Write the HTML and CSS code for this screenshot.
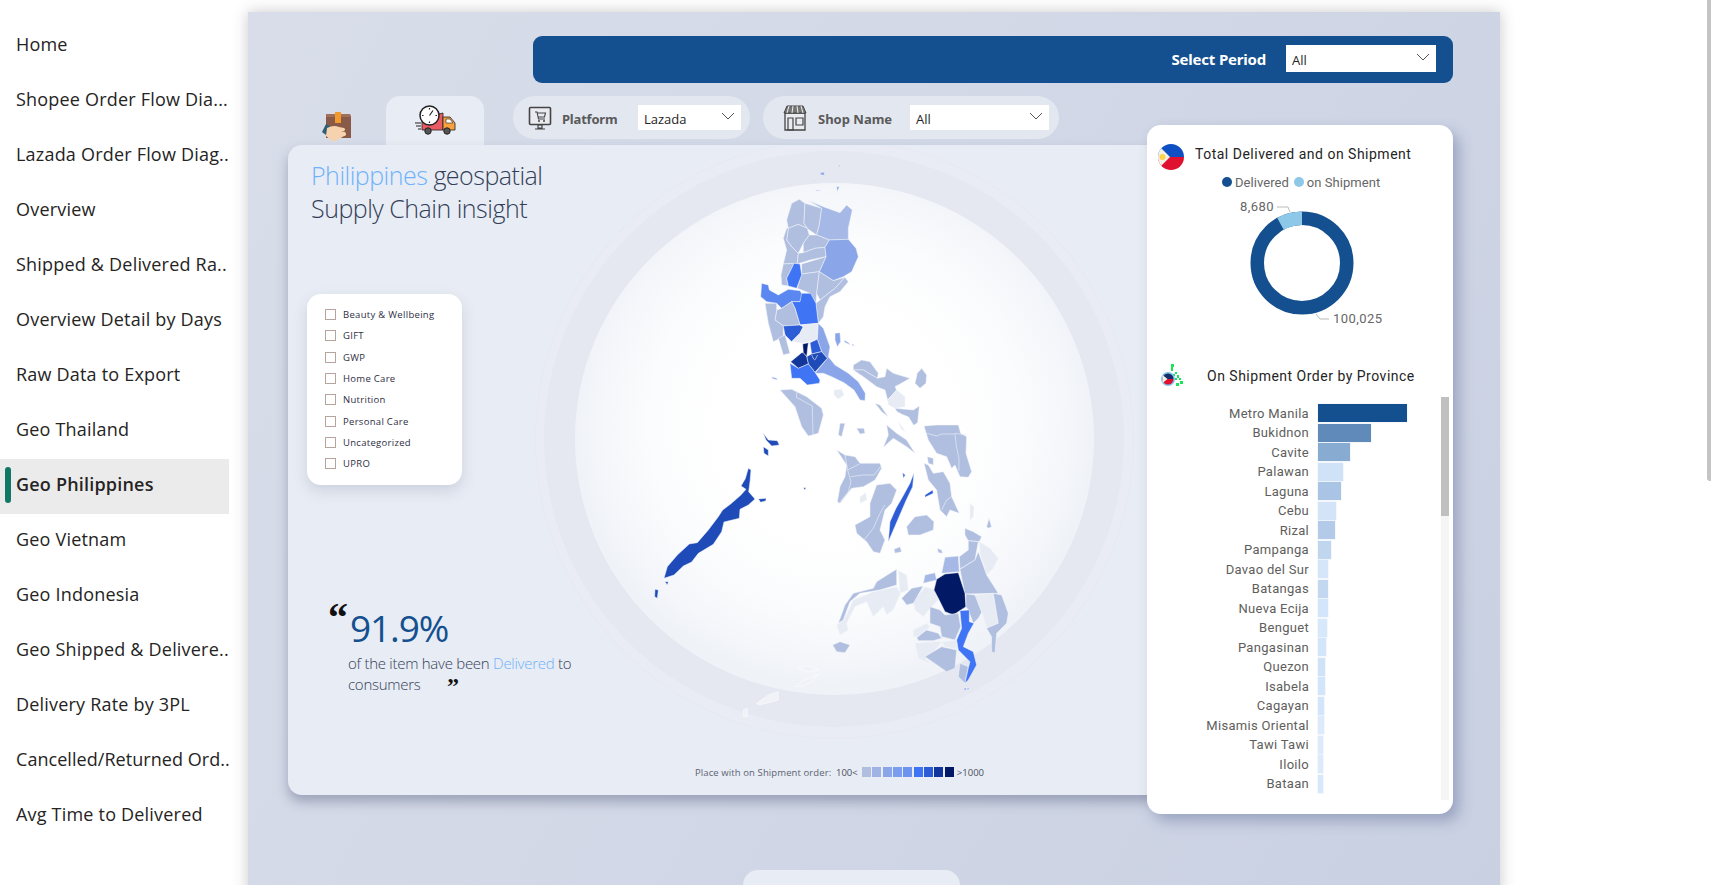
FILE: index.html
```html
<!DOCTYPE html>
<html lang="en">
<head>
<meta charset="utf-8">
<title>Geo Philippines</title>
<link rel="stylesheet" href="styles.css">
</head>
<body>
<nav class="sidebar">
  <a class="nav-item">Home</a>
  <a class="nav-item">Shopee Order Flow Dia...</a>
  <a class="nav-item">Lazada Order Flow Diag..</a>
  <a class="nav-item">Overview</a>
  <a class="nav-item">Shipped &amp; Delivered Ra..</a>
  <a class="nav-item">Overview Detail by Days</a>
  <a class="nav-item">Raw Data to Export</a>
  <a class="nav-item">Geo Thailand</a>
  <a class="nav-item active">Geo Philippines</a>
  <a class="nav-item">Geo Vietnam</a>
  <a class="nav-item">Geo Indonesia</a>
  <a class="nav-item">Geo Shipped &amp; Delivere..</a>
  <a class="nav-item">Delivery Rate by 3PL</a>
  <a class="nav-item nav-tight">Cancelled/Returned Ord..</a>
  <a class="nav-item">Avg Time to Delivered</a>
</nav>

<main class="canvas">
  <header class="period-bar">
    <span class="period-label">Select Period</span>
    <div class="select period-select"><span>All</span><svg class="chev" viewBox="0 0 14 8"><path d="M1 1l6 6 6-6"/></svg></div>
  </header>

  <div class="tab-row">
    <div class="tab">
      <svg class="tab-icon-box" viewBox="0 0 30 32">
        <path d="M4 3h24l1 3v21H4z" fill="#8a5a48"/>
        <path d="M4 3h24l1 3H4z" fill="#a0705a"/>
        <rect x="13" y="1" width="6" height="11" fill="#f29a2e"/>
        <path d="M13 12l3-2 3 2z" fill="#f29a2e"/>
        <path d="M0 21l4-8 4 2-4 9z" fill="#2c5f73"/>
        <path d="M5 17c4-2 8-3 12-1l5 1c2 1 1 3-1 3h-2l4 1c2 2 1 4-1 4l-5 3c-3 2-6 3-8 1l-5-4z" fill="#f6d3ae"/>
      </svg>
    </div>
    <div class="tab tab-active">
      <svg class="tab-icon-truck" viewBox="0 0 42 30">
        <path d="M0 18h6M1 21h5M3 24h3" stroke="#222" stroke-width="1" fill="none"/>
        <path d="M7 13L28 8v17H7z" fill="#ea5a62" stroke="#222" stroke-width=".8"/>
        <path d="M28 12h7l5 6v7H28z" fill="#f7a23e" stroke="#222" stroke-width=".8"/>
        <path d="M31 14h4l3 4h-7z" fill="#fff" stroke="#222" stroke-width=".6"/>
        <circle cx="13" cy="26" r="3.200" fill="#555" stroke="#222"/>
        <circle cx="32" cy="26" r="3.200" fill="#555" stroke="#222"/>
        <circle cx="14.500" cy="10.500" r="9.500" fill="#fff" stroke="#222" stroke-width="1.500"/>
        <path d="M14.500 10.500l3.500-5M14.500 3v1.500M14.500 16.500V18M7 10.500h1.500M20.500 10.500H22" stroke="#222" stroke-width="1.200"/>
      </svg>
    </div>
    <div class="pill pill-platform">
      <svg class="pill-icon" viewBox="0 0 24 24">
        <rect x="1.500" y="1.500" width="21" height="17" rx="1" fill="#e9ebf0" stroke="#444" stroke-width="1.600"/>
        <path d="M7 6h2l1.500 7H17M9.500 7h8l-1 4H10" fill="none" stroke="#444" stroke-width="1.100"/>
        <circle cx="11" cy="15" r="1" fill="#444"/><circle cx="16" cy="15" r="1" fill="#444"/>
        <path d="M10 19h4v3h-4zM7 23h10" fill="none" stroke="#444" stroke-width="1.200"/>
      </svg>
      <span class="pill-label pl-platform">Platform</span>
      <div class="select platform-select"><span>Lazada</span><svg class="chev" viewBox="0 0 14 8"><path d="M1 1l6 6 6-6"/></svg></div>
    </div>
    <div class="pill pill-shop">
      <svg class="pill-icon" viewBox="0 0 24 26">
        <path d="M2 8h20v17H2z" fill="#e9ebf0" stroke="#444" stroke-width="1.300"/>
        <path d="M4 1h16l3 7H1z" fill="#777" stroke="#444"/>
        <path d="M6 1L4 8M10 1L9 8M14 1l1 7M18 1l2 7" stroke="#eee" stroke-width="1"/>
        <path d="M5 13h5v12H5zM13 13h7v7h-7z" fill="none" stroke="#444" stroke-width="1.200"/>
      </svg>
      <span class="pill-label pl-shop">Shop Name</span>
      <div class="select shop-select"><span>All</span><svg class="chev" viewBox="0 0 14 8"><path d="M1 1l6 6 6-6"/></svg></div>
    </div>
  </div>

  <section class="panel">
    <div class="ring ring-outer"></div>
    <div class="ring ring-mid"></div>
    <div class="ring ring-inner"></div>

    <svg class="map" viewBox="288 145 872 650">
      <g class="region" transform="translate(720 160) scale(.3333)">
        <path class="c0" d="M238 118 255 130 252 190 262 205 235 193 205 205 200 180 215 130z"/>
        <path class="c0" d="M255 130 305 145 298 195 290 225 268 210 262 205 252 190z"/>
        <path class="c1" d="M262 120 310 140 360 158 380 135 397 150 385 205 385 238 328 240 290 225 298 195 305 145z"/>
        <path class="c0" d="M205 205 235 193 262 205 268 225 250 250 235 280 215 260 200 240z"/>
        <path class="c0" d="M268 225 290 225 328 240 315 262 285 265 250 278 250 250z"/>
        <path class="c0" d="M190 235 200 205 205 205 200 240 215 260 235 280 232 310 190 312 200 270z"/>
        <path class="c0" d="M235 280 250 278 285 265 315 262 318 290 270 300 232 312z"/>
        <path class="c2" d="M328 240 385 238 408 265 415 290 395 335 370 350 340 362 298 335 318 290 315 262z"/>
        <path class="c0" d="M245 312 318 290 298 335 245 342z"/>
        <path class="c0" d="M190 312 222 310 215 325 200 355 205 378 185 375 183 345z"/>
        <path class="c0" d="M245 342 298 335 290 400 288 430 270 400 232 385z"/>
        <path class="c0" d="M298 335 340 362 375 352 345 385 300 420 290 400z"/>
        <path class="c0" d="M375 352 385 365 360 395 330 410 315 440 310 470 295 490 288 430 300 420 345 385z"/>
        <path class="c5" d="M222 310 240 312 245 345 230 385 205 378 200 355 215 325z"/>
        <path class="c4" d="M125 370 145 375 148 390 175 405 205 388 240 392 248 405 240 425 215 425 185 445 170 430 140 425 122 410z"/>
        <path class="c5" d="M245 400 272 400 288 430 295 490 240 495 225 445 215 425 240 425z"/>
        <path class="c0" d="M170 450 185 445 215 425 225 445 240 495 190 498 165 480z"/>
        <path class="c0" d="M135 430 170 430 170 450 165 480 190 498 190 530 160 545 145 490z"/>
        <path class="c6" d="M190 498 240 495 250 500 240 520 215 545 195 525z"/>
        <path class="c8b" d="M250 500 240 495 295 490 290 540 245 550 222 545 215 545 240 520z"/>
        <path class="c0" d="M175 535 195 525 210 580 190 585z"/>
        <path class="c2" d="M295 490 310 505 330 560 325 590 345 615 385 640 415 665 436 700 435 722 420 720 402 690 372 668 335 650 310 640 285 640 322 595 305 575 292 538z"/>
        <path class="c6" d="M270 548 292 538 305 575 275 582z"/>
        <path class="c8" d="M248 552 265 548 260 590 250 578z"/>
        <path class="c7b" d="M260 590 275 582 305 575 322 595 285 637 265 612z"/>
        <path class="c7" d="M212 605 245 578 250 578 260 590 265 612 235 625z"/>
        <path class="c5" d="M210 610 235 625 265 612 285 637 300 660 298 670 262 675 240 655 215 655z"/>
        <path class="lake" d="M275 585c4 6 4 12 9 15 4-3 5-10 9-15"/>
        <path class="c8b" d="M342 690 365 688 372 705 355 718 342 705z"/>
        <path class="c2" d="M345 520 360 518 362 545 352 560 345 540z"/>
        <path class="c2" d="M300 38 312 36 314 46 302 44zM350 80 358 80 352 95zM288 90 304 90 290 93zM354 16 361 16 358 22zM280 62 283 62 283 70zM155 650 170 655 172 660 158 656zM372 540 386 548 390 554 374 547zM395 552 405 556 397 557z"/>
        <path class="c0" d="M400 615 425 600 450 605 475 640 472 655 430 630 400 630z"/>
        <path class="c0" d="M400 630 430 630 472 655 495 650 500 625 520 640 570 655 540 672 525 680 530 690 503 720 495 690 470 680 430 650z"/>
        <path class="c0" d="M592 640 605 625 620 645 618 670 600 685 585 670z"/>
        <path class="c8b" d="M503 720 530 690 555 710 555 740 525 745 505 735z"/>
      </g>

      <g class="region" transform="translate(720 340) scale(.3333)">
        <path class="c0" d="M180 150 215 148 260 170 305 205 310 225 295 280 265 288 245 260 225 200z"/>
        <path class="line" d="M232 152 229 172 277 198 279 283"/>
        <path class="c0" d="M500 255 530 280 560 300 585 340 560 320 520 295 490 322 505 285zM465 190 480 195 505 230 485 215zM535 245 555 275 545 265zM410 265 432 265 435 280 420 282zM360 250 375 250 365 290 355 285zM525 205 580 210 598 198 593 248 581 256 566 231 546 223 531 215z"/>
        <path class="c0" d="M612 258 650 255 690 255 715 255 722 280 740 290 738 340 755 395 745 412 720 410 705 375 695 385 680 350 650 340 625 300z"/>
        <path class="line" d="M620 280 650 288 665 282 705 282 709 317 717 357 717 392M705 280 740 285"/>
        <path class="c0" d="M612 370 625 375 640 400 670 395 690 430 695 470 718 520 690 510 680 530 660 510 650 450 625 420zM622 350 640 355 640 375 625 370z"/>
        <path class="line" d="M665 510 680 480 695 470"/>
        <path class="c0" d="M350 330 375 345 405 350 420 370 480 370 485 385 465 420 430 440 395 445 360 490 352 485 360 440 375 410 380 375z"/>
        <path class="line" d="M375 345 383 390 393 425 385 455 360 485M383 390 418 372M393 410 430 405 462 405 482 380"/>
        <path class="c0" d="M470 435 510 430 530 450 515 490 495 510 480 570 495 600 480 640 460 635 440 605 410 580 405 555 450 530 450 490z"/>
        <path class="line" d="M495 495 480 520 460 565 432 600"/>
        <path class="c6" d="M582 398 578 440 558 482 528 552 505 605 510 545 528 505 548 470 570 430zM548 398 556 405 550 415zM615 465 638 450 640 460 615 472z"/>
        <path class="c0" d="M560 560 585 530 620 525 642 545 640 570 600 585 565 585zM522 628 540 620 545 635 525 640z"/>
        <path class="c8b" d="M420 470 438 458 440 480 420 490zM750 490 762 500 760 530 750 540z"/>
      </g>

      <g class="region" transform="translate(640 420) scale(.3333)">
        <path class="c7b" d="M72 475 82 440 112 405 148 372 172 368 205 330 235 290 248 270 272 252 302 226 318 208 303 198 316 176 325 145 333 150 330 185 326 215 345 237 325 255 300 268 298 295 252 306 245 335 220 373 195 388 175 400 155 426 130 438 102 465z"/>
        <path class="c7b" d="M370 40 385 60 412 62 418 75 395 78 378 60zM370 80 385 90 385 108 372 100zM355 237 378 235 378 242 362 247zM45 508 55 510 52 535 44 530zM75 485 85 485 82 495zM490 203 498 203 495 210z"/>
        <path class="c0" d="M1040 320 1047 295 1055 320 1045 325zM578 675 600 665 630 675 615 698 590 695z"/>
        <path class="c0" d="M975 325 1000 335 1025 350 1018 365 985 362 975 345zM985 362 1015 365 1005 420 960 447 958 410 985 390zM892 385 905 390 908 400 895 398z"/>
        <path class="c8b" d="M1018 365 1050 385 1075 415 1060 445 1040 465 1020 400z"/>
        <path class="c0" d="M1015 395 1040 465 1075 520 975 522 960 448 1005 420z"/>
        <path class="c1" d="M915 412 955 408 958 455 905 460z"/>
        <path class="c1" d="M855 465 885 458 890 480 850 490z"/>
        <path class="c0" d="M710 485 750 460 770 448 770 495 720 510 660 520 630 545 610 600 595 610 615 555 640 520 700 505z"/>
        <path class="c8b" d="M640 540 700 515 770 500 782 520 760 570 740 585 730 560 700 590 680 545 645 560 620 610 625 630 600 645 590 615 612 600zM775 452 800 465 805 510 780 520z"/>
        <path class="c8b" d="M820 545 855 500 885 510 895 540 875 560 850 590 825 570z"/>
        <path class="c0" d="M785 535 815 505 850 498 820 550 800 555z"/>
        <path class="c8" d="M915 462 955 458 975 520 978 560 940 585 915 575 895 535 882 510 890 478z"/>
        <path class="c0" d="M978 522 1005 525 1035 560 1015 595 1000 610 985 570 978 560z"/>
        <path class="c8b" d="M1005 525 1060 520 1075 610 1040 625 1030 590z"/>
        <path class="c0" d="M1060 520 1085 525 1105 580 1100 610 1070 640 1065 700 1055 695 1055 650 1040 625 1075 610z"/>
        <path class="c0" d="M870 560 900 570 915 585 955 580 962 620 945 660 905 650 900 620 870 610z"/>
        <path class="c0" d="M830 650 860 630 895 640 905 655 880 662 835 662z"/>
        <path class="c8b" d="M820 630 860 610 870 620 835 650 820 650zM825 670 880 665 905 665 870 710 855 715 875 735 835 715zM905 665 950 660 950 688 915 680z"/>
        <path class="c0" d="M855 710 905 680 950 690 945 745 920 755zM960 730 985 740 975 790 955 770z"/>
        <path class="c5" d="M960 572 988 570 988 605 1002 610 985 640 970 680 1000 695 1010 735 985 780 975 790 985 745 990 725 955 690 950 660 965 625z"/>
        <path class="c5" d="M972 806 978 804 979 809 973 809zM982 804 987 804 986 808 982 808z"/>
        <path class="faint" d="M475 745 505 738 535 750 505 755zM350 850 385 825 415 815 415 840 380 850 355 855zM310 870 322 865 322 890 310 890zM465 800 495 780 520 770 540 760 515 785 485 800z"/>
      </g>
    </svg>

    <div class="left-col">
      <h1 class="headline"><span class="hl">Philippines</span> geospatial<br>Supply Chain insight</h1>
      <ul class="filter-card">
        <li><i class="check"></i>Beauty &amp; Wellbeing</li>
        <li><i class="check"></i>GIFT</li>
        <li><i class="check"></i>GWP</li>
        <li><i class="check"></i>Home Care</li>
        <li><i class="check"></i>Nutrition</li>
        <li><i class="check"></i>Personal Care</li>
        <li><i class="check"></i>Uncategorized</li>
        <li><i class="check"></i>UPRO</li>
      </ul>
      <div class="quote">
        <span class="qmark q-open">“</span>
        <div class="quote-num">91.9%</div>
        <p class="quote-text">of the item have been <span class="hl">Delivered</span> to<br>consumers</p>
        <span class="qmark q-close">”</span>
      </div>
    </div>

    <div class="map-legend">
      <span class="lg-text">Place with on Shipment order:</span>
      <span class="lg-num">100&lt;</span>
      <span class="swatches">
        <i class="s0"></i><i class="s1"></i><i class="s2"></i><i class="s3"></i><i class="s4"></i><i class="s5"></i><i class="s6"></i><i class="s7"></i><i class="s8"></i>
      </span>
      <span class="lg-num">&gt;1000</span>
    </div>
  </section>

  <div class="bottom-tab"></div>

  <aside class="side-card">
    <div class="card-head">
      <svg class="flag" viewBox="0 0 26 26">
        <defs><clipPath id="fc"><circle cx="13" cy="13" r="13"/></clipPath></defs>
        <g clip-path="url(#fc)">
          <rect width="26" height="13" fill="#0f4fc4"/>
          <rect y="13" width="26" height="13" fill="#e0102f"/>
          <path d="M0 1l12 12L0 25z" fill="#f4f1e6"/>
          <circle cx="4.500" cy="13" r="3" fill="#fcd34d"/>
        </g>
      </svg>
      <h2 class="card-title">Total Delivered and on Shipment</h2>
    </div>
    <div class="donut-legend">
      <i class="dot dot-dark"></i><span class="dl-1">Delivered</span>
      <i class="dot dot-light"></i><span>on Shipment</span>
    </div>
    <svg class="donut" viewBox="0 0 306 161">
      <circle cx="155" cy="73" r="44.750" fill="none" stroke="#14508f" stroke-width="13.500"/>
      <path d="M155 28.250A44.750 44.750 0 0 0 133.500 33.800" fill="none" stroke="#8ec8e8" stroke-width="13.500"/>
      <path d="M130 17H141L143 22M169 124 173 129H182" fill="none" stroke="#bbb" stroke-width="1"/>
      <text class="dn-label" x="93" y="21">8,680</text>
      <text class="dn-label" x="186" y="133">100,025</text>
    </svg>
    <div class="card-head head-2">
      <svg class="mini-map" viewBox="0 0 24 24">
        <path d="M11 0h3v3h-3zM11 3h2v4h-2zM15 8h2v2h-2zM17 11h2v3h-2zM13 10h2v2h-2zM19 14h2v2h-2zM20 17h3v3h-3zM16 19h3v3h-3zM15 14h2v2h-2z" fill="#19e35a"/>
        <circle cx="8" cy="15" r="7" fill="#7fc0f0"/>
        <path d="M2.500 15a5.500 5.500 0 0 1 11 0z" fill="#16306c"/>
        <path d="M2.500 15a5.500 5.500 0 0 0 11 0z" fill="#e0102f"/>
        <path d="M2.500 11l5 4-5 4z" fill="#f4f1e6"/>
      </svg>
      <h2 class="card-title">On Shipment Order by Province</h2>
    </div>
    <div class="chart-scroll">
      <div class="bars">
        <div class="row"><span class="lbl">Metro Manila</span><i class="bar" style="width:89px;background:#14508f"></i></div>
        <div class="row"><span class="lbl">Bukidnon</span><i class="bar" style="width:53px;background:#5f8aba"></i></div>
        <div class="row"><span class="lbl">Cavite</span><i class="bar" style="width:32px;background:#88abd2"></i></div>
        <div class="row"><span class="lbl">Palawan</span><i class="bar" style="width:25px;background:#cfe2f7"></i></div>
        <div class="row"><span class="lbl">Laguna</span><i class="bar" style="width:23px;background:#a9c4e4"></i></div>
        <div class="row"><span class="lbl">Cebu</span><i class="bar" style="width:18px;background:#d3e4f8"></i></div>
        <div class="row"><span class="lbl">Rizal</span><i class="bar" style="width:17px;background:#b3cbe9"></i></div>
        <div class="row"><span class="lbl">Pampanga</span><i class="bar" style="width:13px;background:#c0d5ee"></i></div>
        <div class="row"><span class="lbl">Davao del Sur</span><i class="bar" style="width:10px;background:#d6e6fa"></i></div>
        <div class="row"><span class="lbl">Batangas</span><i class="bar" style="width:10px;background:#c3d8f0"></i></div>
        <div class="row"><span class="lbl">Nueva Ecija</span><i class="bar" style="width:9.500px;background:#d3e5fa"></i></div>
        <div class="row"><span class="lbl">Benguet</span><i class="bar" style="width:9px;background:#d8e8fb"></i></div>
        <div class="row"><span class="lbl">Pangasinan</span><i class="bar" style="width:8px;background:#d3e5fa"></i></div>
        <div class="row"><span class="lbl">Quezon</span><i class="bar" style="width:6.500px;background:#d0e2f7"></i></div>
        <div class="row"><span class="lbl">Isabela</span><i class="bar" style="width:6.500px;background:#d3e5fa"></i></div>
        <div class="row"><span class="lbl">Cagayan</span><i class="bar" style="width:6px;background:#d3e5fa"></i></div>
        <div class="row"><span class="lbl">Misamis Oriental</span><i class="bar" style="width:5.500px;background:#dceafc"></i></div>
        <div class="row"><span class="lbl">Tawi Tawi</span><i class="bar" style="width:5px;background:#dceafc"></i></div>
        <div class="row"><span class="lbl">Iloilo</span><i class="bar" style="width:5px;background:#dceafc"></i></div>
        <div class="row"><span class="lbl">Bataan</span><i class="bar" style="width:4.500px;background:#d8e8fb"></i></div>
      </div>
      <div class="v-scroll"><div class="v-thumb"></div></div>
    </div>
  </aside>
</main>

<div class="page-scroll"></div>
</body>
</html>
```
FILE: styles.css
```css
* { box-sizing: border-box; }
html, body { margin: 0; padding: 0; height: 885px; overflow: hidden; background: #fff; }
body { display: flex; position: relative; font-family: "Open Sans", "Noto Sans", sans-serif; color: #252423; }

/* Sidebar */
.sidebar { width: 229px; flex: none; padding-top: 19px; }
.nav-item { display: flex; align-items: center; height: 55px; padding-left: 16px; padding-bottom: 6px; font-size: 18px; letter-spacing: .2px; color: #252423; white-space: nowrap; position: relative; }
.nav-tight { letter-spacing: .05px; }
.nav-item.active { background: #ebebeb; font-weight: 600; }
.nav-item.active::before { content: ""; position: absolute; left: 5px; top: 8px; bottom: 11px; width: 6px; border-radius: 3px; background: #117865; }

/* Canvas */
.canvas { position: relative; width: 1252px; height: 885px; margin: 12px 0 0 19px; padding: 24px 46px 0 40px; background: linear-gradient(120deg, #d8dde9 0%, #d3d9e7 40%, #c9d0e2 100%); box-shadow: 0 0 14px rgba(60, 60, 70, .28); }

.period-bar { height: 47px; margin-left: 245px; margin-right: 1px; background: #14508f; border-radius: 9px; display: flex; align-items: center; justify-content: flex-end; padding: 0 17px 2px 0; }
.period-label { color: #fff; font-weight: 700; font-size: 15px; margin-right: 20px; font-family: "Noto Sans", sans-serif; letter-spacing: -.2px; }
.select { background: #fff; display: flex; align-items: center; justify-content: space-between; font-size: 13px; color: #252423; padding: 0 6px 0 6px; }
.select span { padding-top: 2px; }
.chev { width: 14px; height: 8px; margin-bottom: 4px; }
.chev path { fill: none; stroke: #555; stroke-width: 1; }
.period-select { width: 150px; height: 27px; }

.tab-row { display: flex; height: 49px; margin-top: 13px; }
.tab { width: 98px; display: flex; align-items: flex-start; justify-content: center; }
.tab-active { background: #e8ecf4; border-radius: 14px 14px 0 0; }
.tab-icon-box { width: 30px; height: 32px; margin-top: 15px; }
.tab-icon-truck { width: 42px; height: 30px; margin-top: 9px; margin-left: 2px; }
.pill { height: 43px; border-radius: 22px; background: #e3e7f0; display: flex; align-items: center; }
.pill-platform { width: 237px; margin-left: 29px; padding-left: 15px; }
.pill-shop { width: 296px; margin-left: 13px; padding-left: 20px; }
.pill-icon { width: 24px; height: 26px; flex: none; }
.pill-label { font-weight: 700; font-size: 13px; color: #5a5a5a; font-family: "Noto Sans", sans-serif; padding-top: 2px; }
.pl-platform { width: 76px; margin-left: 10px; letter-spacing: -.2px; }
.pl-shop { width: 92px; margin-left: 11px; }
.platform-select { width: 103px; height: 25px; }
.shop-select { width: 139px; height: 25px; }

/* Panel */
.panel { position: relative; display: flex; width: 872px; height: 650px; background: #e8ecf4; border-radius: 14px 0 0 14px; box-shadow: 0 7px 12px rgba(90, 100, 130, .45); overflow: hidden; }
.ring { position: absolute; border-radius: 50%; }
.ring-outer { left: 248px; top: -4px; width: 597px; height: 597px; background: #e9ecf4; box-shadow: 0 0 0 1px #e6e9f2; }
.ring-mid { left: 256px; top: 6px; width: 580px; height: 576px; background: #e5e8f1; }
.ring-inner { left: 287px; top: 38px; width: 519px; height: 512px; background: radial-gradient(circle 262px at 50% 47%, #fff 0%, #fff 45%, #fbfcfd 70%, #f4f6fa 90%, #eff2f7 100%); }
.map { position: absolute; left: 0; top: 0; width: 872px; height: 650px; }
.map path { stroke: #f4f6fb; stroke-width: 1.500; stroke-linejoin: round; }
.c0 { fill: #b0bfe0; }
.c1 { fill: #a5b8e6; }
.c2 { fill: #8aa6e8; }
.c4 { fill: #5b87f0; }
.c5 { fill: #3f74f5; }
.c6 { fill: #2c5cd6; }
.c7 { fill: #12369a; }
.c7b { fill: #1f4bb8; }
.c8 { fill: #021a66; }
.c8b { fill: #e7ebf3; }
.map path.line, .map path.lake { fill: none; stroke: #e8edf7; stroke-width: 2; }
.map path.faint { fill: #f0f2f8; stroke: #fff; }

.left-col { position: relative; width: 300px; flex: none; padding: 14px 0 0 23px; }
.headline { margin: 0; font-weight: 300; font-size: 25px; line-height: 33px; color: #333f58; letter-spacing: -.5px; white-space: nowrap; }
.hl { color: #6fb2fb; }
.filter-card { list-style: none; margin: 69px 0 0 -4px; padding: 10px 0 0 18px; width: 155px; height: 191px; background: #fff; border-radius: 14px; box-shadow: 0 6px 14px rgba(110, 120, 150, .22); }
.filter-card li { display: flex; align-items: center; height: 21.300px; font-size: 9.500px; color: #2e2e44; letter-spacing: .3px; white-space: nowrap; }
.check { width: 11px; height: 11px; flex: none; border: 1px solid #b5a59c; margin-right: 7px; background: #fff; }
.quote { position: relative; margin: 118px 0 0 37px; }
.quote-num { width: fit-content; height: 50px; font-size: 37px; line-height: 50px; color: #14508f; letter-spacing: -1.100px; padding-left: 2px; font-weight: 400; }
.quote-text { width: fit-content; margin: 0; font-size: 15px; line-height: 21px; font-weight: 350; color: #333f58; letter-spacing: -.27px; white-space: nowrap; }
.qmark { position: absolute; font-family: "Liberation Serif", serif; font-weight: 700; color: #111; }
.q-open { left: -20px; top: -5px; font-size: 40px; line-height: 1; }
.q-close { left: 99px; top: 75px; font-size: 24px; line-height: 16px; }

.map-legend { position: absolute; left: 407px; bottom: 17px; display: flex; align-items: center; height: 12px; font-size: 9.500px; color: #5c6272; white-space: nowrap; }
.lg-text { width: 141px; letter-spacing: .1px; }
.lg-num { color: #4a4f60; }
.swatches { display: flex; gap: 1.400px; margin: 0 3px 0 4px; }
.swatches i { width: 9px; height: 10px; display: block; }
.s0 { background: #b0bfe0; } .s1 { background: #9fb3e4; } .s2 { background: #8aa6e8; }
.s3 { background: #7a9df0; } .s4 { background: #6c93f0; } .s5 { background: #3f74f5; }
.s6 { background: #2c5cd6; } .s7 { background: #12369a; } .s8 { background: #021a66; }

.bottom-tab { width: 217px; height: 40px; margin: 75px 0 0 455px; background: #e8ecf4; border-radius: 15px 15px 0 0; }

/* Right card */
.side-card { position: absolute; left: 899px; top: 113px; width: 306px; height: 689px; background: #fff; border-radius: 14px; box-shadow: 6px 7px 14px rgba(85, 100, 145, .42); font-family: Roboto, sans-serif; }
.card-head { display: flex; align-items: center; padding: 16px 0 0 11px; height: 42px; }
.flag { width: 26px; height: 26px; flex: none; margin-top: 6px; }
.card-title { margin: 0 0 0 11px; font-size: 14px; font-weight: 400; color: #252423; letter-spacing: .5px; white-space: nowrap; }
.donut-legend { display: flex; align-items: center; height: 16px; margin-top: 7px; padding-left: 75px; font-size: 13px; color: #666; letter-spacing: .05px; }
.dot { width: 10px; height: 10px; border-radius: 50%; margin-right: 3px; }
.dot-dark { background: #14508f; }
.dot-light { background: #8ec8e8; }
.dl-1 { margin-right: 5px; }
.donut { display: block; width: 306px; height: 161px; }
.dn-label { font-size: 13px; fill: #666; letter-spacing: .45px; font-family: Roboto, sans-serif; }
.head-2 { padding: 0 0 0 13px; height: 24px; margin-top: 13px; }
.mini-map { width: 24px; height: 24px; flex: none; }
.head-2 .card-title { margin-left: 23px; }
.chart-scroll { position: relative; display: flex; height: 403px; margin-top: 9px; }
.bars { width: 294px; padding-top: 7px; display: flex; flex-direction: column; gap: 1.500px; }
.row { display: flex; align-items: center; height: 18px; }
.lbl { width: 162px; text-align: right; font-size: 13px; color: #605e5c; letter-spacing: .3px; white-space: nowrap; }
.bar { display: block; height: 18px; margin-left: 9px; box-shadow: 0 0 0 .5px rgba(225, 235, 250, .7); }
.v-scroll { width: 8px; height: 403px; background: #f5f5f5; }
.v-thumb { height: 119px; background: #c0c0c0; }

.page-scroll { position: absolute; right: 0; top: 0; width: 4px; height: 481px; background: #c4c4c4; border-radius: 0 0 0 3px; }
```
